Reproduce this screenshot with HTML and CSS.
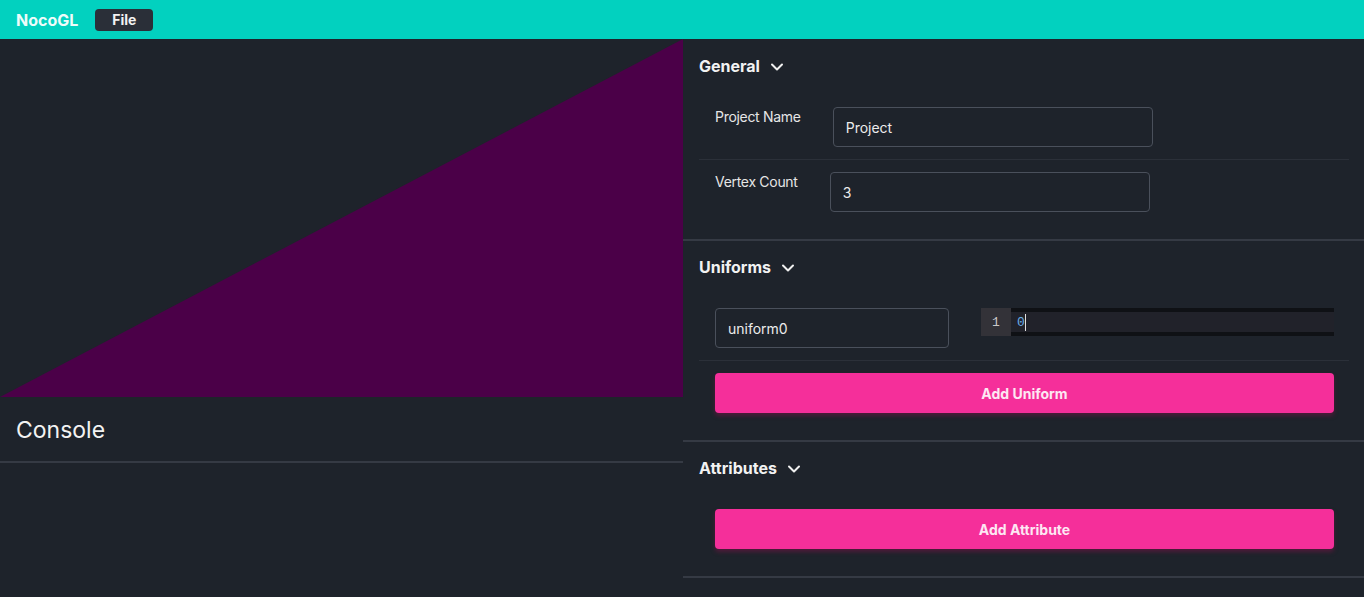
FILE: index.html
```html
<!DOCTYPE html>
<html>
<head>
<meta charset="utf-8">
<link rel="stylesheet" href="styles.css">
</head>
<body>
<header class="topbar">
  <span class="brand">NocoGL</span>
  <button class="file-btn">File</button>
</header>
<main class="main">
  <section class="left">
    <div class="canvas">
      <svg width="683" height="358" viewBox="0 0 683 358" preserveAspectRatio="none">
        <polygon points="0,358 683,0 683,358" fill="#4b0048"/>
      </svg>
    </div>
    <div class="console-head">Console</div>
    <div class="console-body"></div>
  </section>
  <section class="right">
    <div class="section">
      <div class="sec-head first">General <svg class="chev" width="16" height="16" viewBox="0 0 16 16"><path d="M3 5.5 L8 10.5 L13 5.5" fill="none" stroke="#f0f0f0" stroke-width="2" stroke-linecap="round" stroke-linejoin="round"/></svg></div>
      <div class="sec-body">
        <div class="row field-row r1">
          <label class="lbl">Project Name</label>
          <input class="inp wide" value="Project">
        </div>
        <div class="row field-row r2 last">
          <label class="lbl">Vertex Count</label>
          <input class="inp wide" value="3">
        </div>
      </div>
    </div>
    <div class="section">
      <div class="sec-head">Uniforms <svg class="chev" width="16" height="16" viewBox="0 0 16 16"><path d="M3 5.5 L8 10.5 L13 5.5" fill="none" stroke="#f0f0f0" stroke-width="2" stroke-linecap="round" stroke-linejoin="round"/></svg></div>
      <div class="sec-body">
        <div class="row uni-row">
          <input class="inp uni-name" value="uniform0">
          <div class="editor">
            <div class="gutter">1</div>
            <div class="code"><span class="num">0</span><span class="caret"></span></div>
          </div>
        </div>
        <div class="btn-row btn-uni">
          <button class="pink-btn">Add Uniform</button>
        </div>
      </div>
    </div>
    <div class="section">
      <div class="sec-head">Attributes <svg class="chev" width="16" height="16" viewBox="0 0 16 16"><path d="M3 5.5 L8 10.5 L13 5.5" fill="none" stroke="#f0f0f0" stroke-width="2" stroke-linecap="round" stroke-linejoin="round"/></svg></div>
      <div class="sec-body">
        <div class="btn-row btn-attr">
          <button class="pink-btn">Add Attribute</button>
        </div>
      </div>
    </div>
  </section>
</main>
</body>
</html>
```
FILE: styles.css
```css
* { box-sizing: border-box; }
html, body { margin: 0; padding: 0; }
body {
  background: #1e232b;
  font-family: Inter, "Noto Sans", sans-serif;
  color: #ececec;
  width: 1364px;
  height: 597px;
  overflow: hidden;
}
.topbar {
  height: 39px;
  background: #02d1bf;
  display: flex;
  align-items: center;
  padding-left: 16px;
}
.brand {
  font-weight: 700;
  font-size: 16px;
  color: #eefcfa;
  margin-right: 17px;
}
.file-btn {
  background: #2a2f38;
  color: #f2f2f2;
  border: none;
  border-radius: 4px;
  width: 58px;
  height: 22px;
  font-family: inherit;
  font-weight: 700;
  font-size: 14px;
  padding: 0;
}
.main {
  display: flex;
  height: 558px;
}
.left {
  width: 683px;
  display: flex;
  flex-direction: column;
}
.canvas { height: 358px; }
.canvas svg { display: block; }
.console-head {
  height: 66px;
  display: flex;
  align-items: center;
  padding-left: 16px;
  padding-top: 2px;
  font-size: 23px;
  color: #f2f2f2;
  border-bottom: 2px solid #353a44;
}
.right {
  width: 681px;
  display: flex;
  flex-direction: column;
}
.section {
  border-bottom: 2px solid #353a44;
}
.sec-head {
  height: 54px;
  display: flex;
  align-items: center;
  padding-left: 16px;
  padding-bottom: 2px;
  font-weight: 700;
  font-size: 16px;
  color: #f2f2f2;
  gap: 9px;
}
.sec-head.first { padding-bottom: 0; }
.chev { display: block; margin-top: 1px; }
.sec-body {
  padding: 0 15px 0 16px;
}
.row {
  display: flex;
  padding-left: 16px;
  padding-right: 15px;
  border-bottom: 1px solid #2b3039;
}
.field-row { gap: 32px; align-items: flex-start; }
.r1 { padding-top: 14px; padding-bottom: 12px; }
.r2 { padding-top: 12px; padding-bottom: 27px; }
.row.last { border-bottom: none; }
.lbl {
  font-size: 14px;
  line-height: 20px;
  letter-spacing: -0.3px;
  color: #e6e6e6;
}
.inp {
  height: 40px;
  background: transparent;
  border: 1px solid #4a505b;
  border-radius: 4px;
  color: #ececec;
  font-family: inherit;
  font-size: 14px;
  padding: 0 12px;
  outline: none;
}
.wide { width: 320px; }
.uni-row {
  padding-top: 13px;
  padding-bottom: 12px;
  gap: 32px;
  align-items: flex-start;
}
.uni-name { width: 234px; flex: none; }
.editor {
  flex: 1;
  height: 28px;
  display: flex;
  background: #0f1115;
}
.gutter {
  width: 30px;
  background: #333238;
  color: #c8c8c8;
  font-family: "Liberation Mono", "DejaVu Sans Mono", monospace;
  font-size: 13px;
  display: flex;
  align-items: center;
  justify-content: center;
}
.code {
  flex: 1;
  margin: 4px 0;
  background: #21222a;
  display: flex;
  align-items: center;
  padding-left: 6px;
  font-family: "Liberation Mono", "DejaVu Sans Mono", monospace;
  font-size: 13px;
}
.num { color: #6aaee8; }
.caret { width: 1px; height: 17px; background: #e0e0e0; }
.btn-row {
  padding: 12px 15px 27px 16px;
}
.btn-attr { padding-top: 13px; padding-bottom: 27px; }
.pink-btn {
  width: 100%;
  height: 40px;
  background: #f52f9a;
  color: #fde8f3;
  border: none;
  border-radius: 4px;
  font-family: inherit;
  font-weight: 700;
  font-size: 14px;
  box-shadow: 0 3px 4px rgba(120, 20, 70, 0.55);
}
```
